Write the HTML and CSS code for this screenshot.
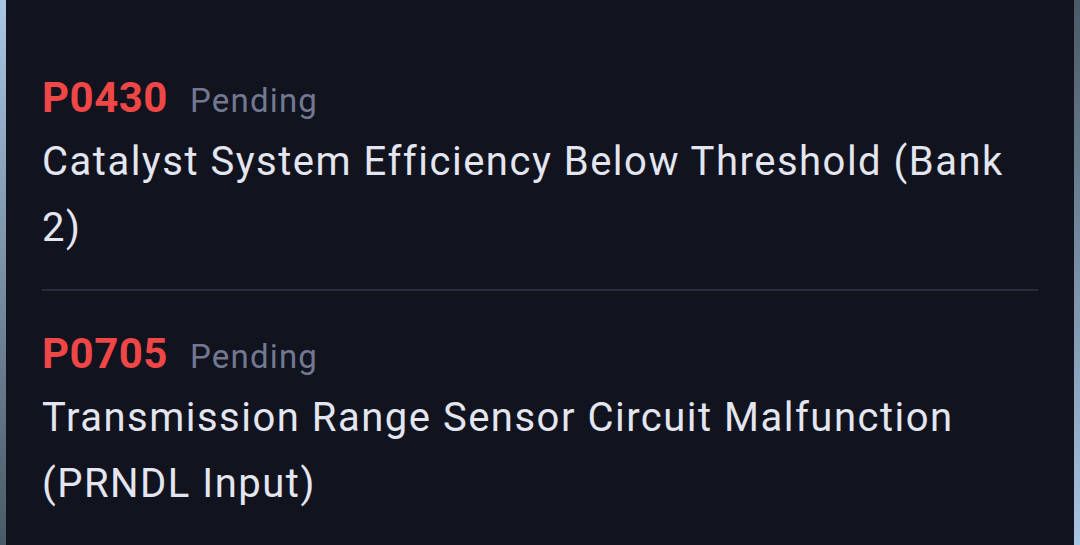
FILE: index.html
```html
<!DOCTYPE html>
<html lang="en">
<head>
    <meta charset="UTF-8">
    <meta name="viewport" content="width=device-width, initial-scale=1.0">
    <title>Trouble Codes</title>
    <link rel="stylesheet" href="styles.css">
</head>
<body>
    <div class="frame">
        <div class="panel">
            <div class="code-item">
                <div class="code-head">
                    <span class="code">P0430</span>
                    <span class="status">Pending</span>
                </div>
                <p class="desc">Catalyst System Efficiency Below Threshold (Bank 2)</p>
            </div>
            <div class="code-item">
                <div class="code-head">
                    <span class="code">P0705</span>
                    <span class="status">Pending</span>
                </div>
                <p class="desc">Transmission Range Sensor Circuit Malfunction (PRNDL Input)</p>
            </div>
        </div>
    </div>
</body>
</html>
```

FILE: styles.css
```css
html, body {
    margin: 0;
    padding: 0;
    height: 100%;
}

body {
    font-family: Roboto, "Noto Sans", sans-serif;
    background-color: #11131f;
    overflow: hidden;
}

.frame {
    display: flex;
    height: 100%;
    background: linear-gradient(to bottom, #a9c6e4, #4a5966);
}

.panel {
    flex: 1;
    margin: 0 6px;
    padding: 70px 36px 0 36px;
    background-color: #11131f;
}

/* right edge strip runs the other way */
.frame::after {
    content: "";
    width: 6px;
    margin-left: -6px;
    background: linear-gradient(to bottom, #4a5966, #a9c6e4);
}

.code-item {
    padding: 0 0 28px 0;
    border-bottom: 2px solid #2a2d3e;
}

.code-item + .code-item {
    padding-top: 35px;
    border-bottom: none;
}

.code-head {
    display: flex;
    align-items: baseline;
    height: 56px;
    line-height: 56px;
}

.code {
    color: #ef4646;
    font-weight: 700;
    font-size: 42px;
    letter-spacing: 0.5px;
    margin-right: 22px;
}

.status {
    color: #737891;
    font-size: 33px;
    letter-spacing: 1.2px;
}

.desc {
    margin: 3px 0 0 0;
    color: #e3e5ef;
    font-size: 40px;
    letter-spacing: 1.5px;
    line-height: 66px;
}
```
